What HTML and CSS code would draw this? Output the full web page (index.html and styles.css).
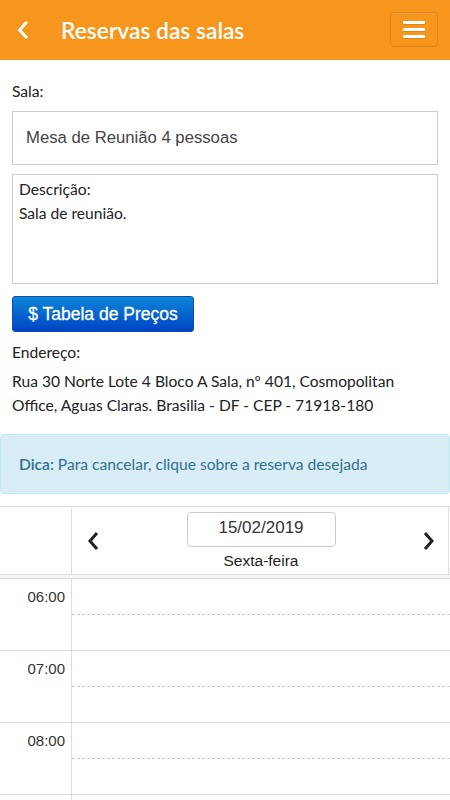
FILE: index.html
```html
<!DOCTYPE html>
<html lang="pt">
<head>
<meta charset="utf-8">
<title>Reservas das salas</title>
<link rel="stylesheet" href="styles.css">
</head>
<body>
<header class="topbar">
  <a class="back" href="#" aria-label="Voltar">
    <svg width="14" height="18" viewBox="0 0 14 18"><path d="M10 2 L3.5 9 L10 16" fill="none" stroke="#fff" stroke-width="3" stroke-linecap="square"/></svg>
  </a>
  <h1 class="title">Reservas das salas</h1>
  <button class="menu" aria-label="Menu">
    <span class="bar"></span><span class="bar"></span><span class="bar"></span>
  </button>
</header>

<main class="content">
  <div class="label">Sala:</div>
  <div class="field">Mesa de Reunião 4 pessoas</div>
  <div class="desc">
    <div>Descrição:</div>
    <div>Sala de reunião.</div>
  </div>
  <button class="price-btn">$ Tabela de Preços</button>
  <div class="label addr-label">Endereço:</div>
  <p class="address">Rua 30 Norte Lote 4 Bloco A Sala, nº 401, Cosmopolitan Office, Aguas Claras. Brasilia - DF - CEP - 71918-180</p>
</main>

<div class="alert"><strong>Dica:</strong> Para cancelar, clique sobre a reserva desejada</div>

<section class="calendar">
  <div class="cal-head">
    <div class="cal-gutter"></div>
    <div class="cal-day">
      <span class="nav">
        <svg width="14" height="22" viewBox="0 0 14 22"><path d="M11 3 L4 11 L11 19" fill="none" stroke="#222" stroke-width="3"/></svg>
      </span>
      <div class="day-center">
        <div class="date-box">15/02/2019</div>
        <div class="weekday">Sexta-feira</div>
      </div>
      <span class="nav">
        <svg width="14" height="22" viewBox="0 0 14 22"><path d="M3 3 L10 11 L3 19" fill="none" stroke="#222" stroke-width="3"/></svg>
      </span>
    </div>
  </div>
  <div class="cal-sep"></div>
  <div class="cal-body">
    <div class="hour">
      <div class="time">06:00</div>
      <div class="slots"><div class="slot half"></div><div class="slot"></div></div>
    </div>
    <div class="hour">
      <div class="time">07:00</div>
      <div class="slots"><div class="slot half"></div><div class="slot"></div></div>
    </div>
    <div class="hour">
      <div class="time">08:00</div>
      <div class="slots"><div class="slot half"></div><div class="slot"></div></div>
    </div>
    <div class="hour">
      <div class="time"></div>
      <div class="slots"><div class="slot half"></div><div class="slot"></div></div>
    </div>
  </div>
</section>
</body>
</html>
```

FILE: styles.css
```css
* { box-sizing: border-box; }
html, body { margin: 0; padding: 0; }
body {
  width: 450px;
  height: 800px;
  overflow: hidden;
  background: #fff;
  font-family: "Lato", "Open Sans", sans-serif;
  color: #222;
  font-size: 15.6px;
}
.topbar {
  height: 60px;
  background: #f7961d;
  display: flex;
  align-items: center;
  padding: 0 12px 0 16px;
}
.back {
  display: flex;
  width: 45px;
  height: 20px;
  align-items: center;
}
.title {
  margin: 0;
  flex: 1;
  color: #fff;
  font-size: 22.8px;
  font-weight: 600;
  letter-spacing: 0;
}
.menu {
  width: 48px;
  height: 35px;
  margin-top: -2px;
  border: 1px solid #e0861a;
  border-radius: 4px;
  background: #f7961d;
  display: flex;
  flex-direction: column;
  align-items: center;
  justify-content: center;
  gap: 4px;
  padding: 0;
  box-shadow: inset 0 1px 0 rgba(255,255,255,0.1);
}
.bar {
  display: block;
  width: 22px;
  height: 3px;
  background: #fff;
  border-radius: 1px;
  box-shadow: 0 1px 0 rgba(0,0,0,0.12);
}
.content {
  padding: 20px 12px 0 12px;
}
.label {
  line-height: 22px;
  height: 22px;
}
.field {
  margin-top: 9px;
  height: 54px;
  border: 1px solid #ccc;
  padding: 0 13px;
  display: flex;
  align-items: center;
  font-family: "Liberation Sans", Arial, sans-serif;
  font-size: 16.7px;
  color: #444;
}
.desc {
  margin-top: 9px;
  height: 110px;
  border: 1px solid #ccc;
  padding: 2px 6px;
  line-height: 24px;
}
.price-btn {
  margin-top: 12px;
  height: 36px;
  width: 182px;
  border: 1px solid #0a4fb0;
  border-radius: 3px;
  background: linear-gradient(#0c86d8, #0044c4);
  color: #fff;
  font-family: "Liberation Sans", Arial, sans-serif;
  font-size: 17.5px;
  font-weight: 400;
  -webkit-text-stroke: 0.3px #fff;
  padding: 0;
  display: block;
}
.addr-label {
  margin-top: 8px;
  line-height: 24px;
  height: 24px;
}
.address {
  margin: 5px 0 0;
  line-height: 24px;
  padding-right: 30px;
}
.alert {
  margin-top: 17px;
  height: 60px;
  background: #d9edf7;
  border: 1px solid #bce8f1;
  border-radius: 4px;
  color: #31708f;
  display: flex;
  align-items: center;
  padding: 0 18px;
}
.alert strong { font-weight: 600; margin-right: 4px; }
.calendar {
  margin-top: 12px;
  border-top: 1px solid #ddd;
}
.cal-head {
  display: flex;
  height: 67px;
}
.cal-gutter {
  width: 72px;
  border-right: 1px solid #ddd;
}
.cal-day {
  flex: 1;
  display: flex;
  align-items: flex-start;
  justify-content: space-between;
  padding: 0 12px 0 14px;
  border-right: 1px solid #ddd;
  margin-right: 1px;
}
.nav {
  display: flex;
  margin-top: 23px;
}
.day-center {
  display: flex;
  flex-direction: column;
  align-items: center;
  padding-top: 5px;
}
.date-box {
  width: 149px;
  height: 35px;
  border: 1px solid #ccc;
  border-radius: 4px;
  display: flex;
  align-items: center;
  justify-content: center;
  font-family: "Liberation Sans", Arial, sans-serif;
  font-size: 17px;
  color: #333;
  padding-bottom: 3px;
}
.weekday {
  margin-top: 5px;
  font-family: "Liberation Sans", Arial, sans-serif;
  font-size: 15.5px;
  color: #222;
}
.cal-sep {
  height: 5px;
  border-top: 1px solid #ddd;
  border-bottom: 1px solid #ddd;
  background: #f5f5f5;
}
.hour {
  display: flex;
  height: 72px;
  border-bottom: 1px solid #ddd;
}
.time {
  width: 72px;
  border-right: 1px solid #ddd;
  text-align: right;
  padding: 9px 6px 0 0;
  font-family: "Liberation Sans", Arial, sans-serif;
  font-size: 15px;
  color: #333;
}
.slots {
  flex: 1;
  display: flex;
  flex-direction: column;
}
.slot { flex: 1; }
.slot.half { flex: none; height: 36px; border-bottom: 1px dashed #ccc; }
```
